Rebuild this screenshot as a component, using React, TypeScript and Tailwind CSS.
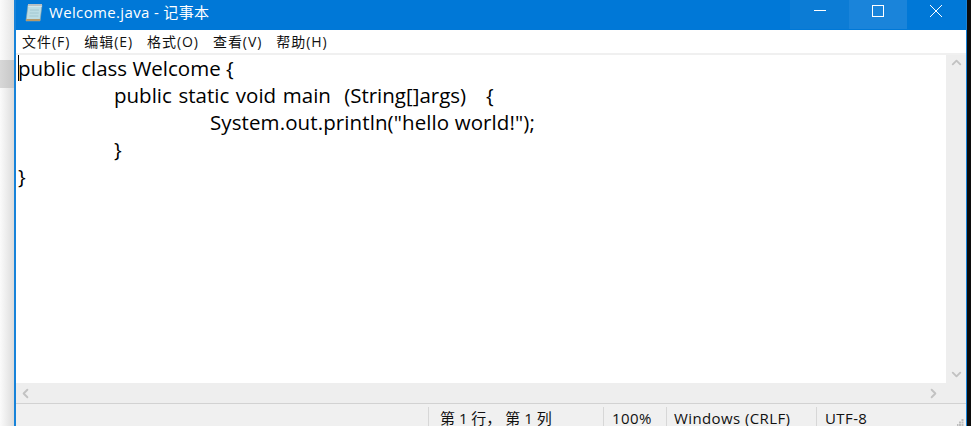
import { ChevronUp, ChevronDown, ChevronLeft, ChevronRight } from "lucide-react";

const menus = ["文件(F)", "编辑(E)", "格式(O)", "查看(V)", "帮助(H)"];

const lines = [
  { indent: "pl-0", text: "public class Welcome {" },
  { indent: "pl-24 [word-spacing:1.3px]", text: "public static void main  (String[]args)   {" },
  { indent: "pl-48 tracking-[0.1px]", text: 'System.out.println("hello world!");' },
  { indent: "pl-24", text: "}" },
  { indent: "pl-0", text: "}" },
];

const status = [
  { text: "第 1 行， 第 1 列", width: "w-[175px] pl-[11px] tracking-normal" },
  { text: "100%", width: "w-[63px] pl-[8px]" },
  { text: "Windows (CRLF)", width: "w-[150px] pl-[7px]" },
  { text: "UTF-8", width: "w-[150px] pl-[8px]" },
];

const NotepadIcon = () => (
  <svg width="20" height="20" viewBox="0 0 20 20">
    <path d="M4 2h14l-2 16H2z" fill="#bcdde4" stroke="#8fa6ad" strokeWidth="0.6" />
    <path d="M2 18h14l.3-2H2.3z" fill="#b59a6a" />
    <path d="M4 1h14v2.5H4z" fill="#e8eef0" />
    <path d="M5 1v2M7 1v2M9 1v2M11 1v2M13 1v2M15 1v2M17 1v2" stroke="#6d7b80" strokeWidth="0.8" />
    <path d="M6 7h9M5.7 10h9M5.4 13h9" stroke="#9cc4cc" strokeWidth="0.8" />
  </svg>
);

const Grip = () => (
  <svg width="7" height="7" viewBox="0 0 7 7" fill="#bdbdbd" className="absolute bottom-0 right-[2px]">
    <rect x="4.5" y="0" width="2" height="2" />
    <rect x="4.5" y="2.5" width="2" height="2" />
    <rect x="2" y="2.5" width="2" height="2" />
    <rect x="4.5" y="5" width="2" height="2" />
    <rect x="2" y="5" width="2" height="2" />
    <rect x="-0.5" y="5" width="2" height="2" />
  </svg>
);

export default function App() {
  return (
    <div
      className="flex h-[426px] w-[971px] overflow-hidden bg-[#f1f1f1]"
      style={{ fontFamily: '"Open Sans", "Noto Sans CJK SC", sans-serif' }}
    >
      <div className="flex w-[14px] shrink-0 flex-col">
        <div className="h-[60px] bg-gradient-to-r from-[#fbfbfb] to-[#e4e4e4]" />
        <div className="h-[28px] bg-gradient-to-r from-[#d8d8d8] to-[#c6c6c6]" />
        <div className="flex-1 bg-gradient-to-r from-[#fbfbfb] to-[#dcdcdc]" />
      </div>
      <div className="flex w-[953px] shrink-0 flex-col border-l-2 border-r border-[#1783d9] bg-white">
        <div className="flex h-[30px] shrink-0 bg-[#0078d7] pl-[8px] text-white">
          <div className="flex h-[25px] items-center">
            <NotepadIcon />
            <span className="ml-[5px] text-[15px] tracking-[0.35px]">Welcome.java - 记事本</span>
          </div>
          <div className="ml-auto flex h-[29px]">
            <div className="flex w-[59px] justify-center bg-[#0c7cd5] pt-[10px]">
              <div className="h-px w-3 bg-white" />
            </div>
            <div className="flex w-[58px] justify-center bg-[#1a84da] pr-[1px] pt-[5px]">
              <div className="h-3 w-3 border border-white" />
            </div>
            <div className="flex w-[59px] justify-center pr-[2px] pt-[5px]">
              <svg width="12" height="12" viewBox="0 0 12 12" stroke="white" strokeWidth="1">
                <path d="M0 0l12 12M12 0L0 12" />
              </svg>
            </div>
          </div>
        </div>
        <div className="flex h-[23px] shrink-0 items-center gap-[14px] pl-[6px] text-[14px] tracking-[0.95px] text-[#111]">
          {menus.map((m) => (
            <span key={m}>{m}</span>
          ))}
        </div>
        <div className="flex min-h-0 flex-1 border-t-2 border-[#f0f0f0]">
          <div className="relative flex-1 pl-[2px] text-[20.5px] leading-[27px] text-black">
            <div className="absolute left-[2px] top-0 h-[26px] w-px bg-black" />
            {lines.map((l, i) => (
              <div key={i} className={`whitespace-pre ${l.indent}`}>
                {l.text}
              </div>
            ))}
          </div>
          <div className="flex w-[20px] flex-col items-center justify-between bg-[#eeeeee] pb-[1px] text-[#c2c2c2]">
            <ChevronUp size={15} strokeWidth={3} />
            <ChevronDown size={15} strokeWidth={3} />
          </div>
        </div>
        <div className="flex h-[20px] shrink-0 items-center justify-between bg-[#eeeeee] pl-[2px] pr-[25px] text-[#c2c2c2]">
          <ChevronLeft size={15} strokeWidth={3} />
          <ChevronRight size={15} strokeWidth={3} />
        </div>
        <div className="relative flex h-[23px] shrink-0 justify-end border-t border-[#d2d2d2] bg-[#f0f0f0] pt-[3px] text-[15px] tracking-[0.4px] text-[#111]">
          {status.map((s) => (
            <div key={s.text} className={`${s.width} whitespace-pre border-l border-[#d7d7d7]`}>
              {s.text}
            </div>
          ))}
          <Grip />
        </div>
      </div>
      <div className="flex-1 bg-[#0c0c0c]" />
    </div>
  );
}
